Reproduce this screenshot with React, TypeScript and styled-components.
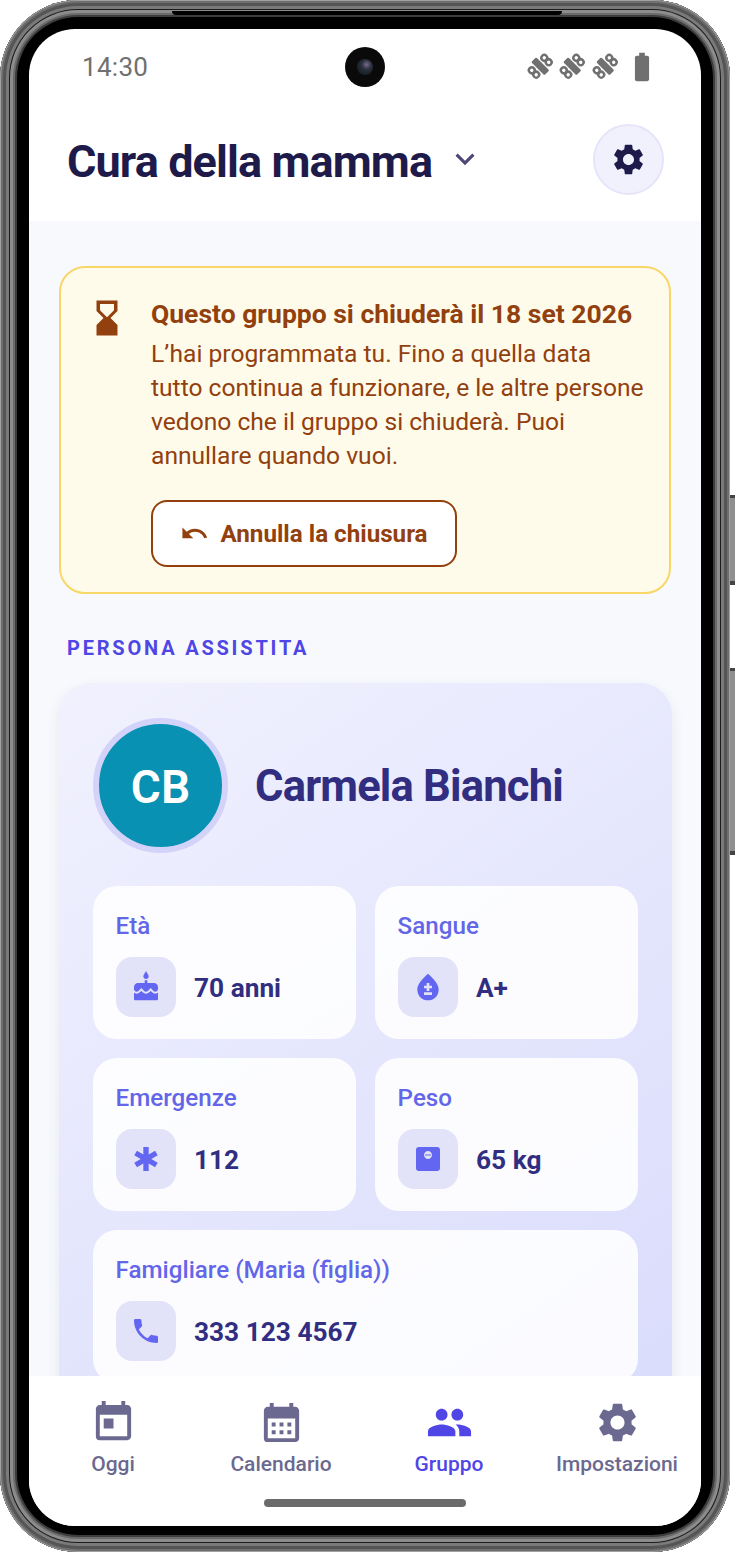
import { createGlobalStyle } from "styled-components";
import styled from "styled-components";
import {
  MdBatteryFull,
  MdBloodtype,
  MdCake,
  MdCalendarMonth,
  MdEmergency,
  MdExpandMore,
  MdHourglassBottom,
  MdMonitorWeight,
  MdPeople,
  MdPhone,
  MdSettings,
  MdToday,
  MdUndo,
} from "react-icons/md";
import type { IconType } from "react-icons";

const GlobalStyle = createGlobalStyle`
  html, body {
    margin: 0;
    background: #fff;
  }
  * {
    box-sizing: border-box;
  }
`;

type InfoItem = {
  label: string;
  value: string;
  icon: IconType;
  wide?: boolean;
};

const infoItems: InfoItem[] = [
  { label: "Età", value: "70 anni", icon: MdCake },
  { label: "Sangue", value: "A+", icon: MdBloodtype },
  { label: "Emergenze", value: "112", icon: MdEmergency },
  { label: "Peso", value: "65 kg", icon: MdMonitorWeight },
  { label: "Famigliare (Maria (figlia))", value: "333 123 4567", icon: MdPhone, wide: true },
];

type NavItem = {
  label: string;
  icon: IconType;
  active?: boolean;
};

const navItems: NavItem[] = [
  { label: "Oggi", icon: MdToday },
  { label: "Calendario", icon: MdCalendarMonth },
  { label: "Gruppo", icon: MdPeople, active: true },
  { label: "Impostazioni", icon: MdSettings },
];

// the satellite glyph of the status bar: body bar with two "8" shaped panels
function SatelliteIcon() {
  return (
    <svg width="32.5" height="32.5" viewBox="0 0 28 28">
      <g transform="rotate(-45 14 14)" fill="none" stroke="currentColor" strokeWidth="2.1">
        <rect x="11" y="6" width="6" height="16" rx="1" fill="currentColor" stroke="none" />
        <circle cx="6.4" cy="11.3" r="2.5" />
        <circle cx="6.4" cy="16.7" r="2.5" />
        <circle cx="21.6" cy="11.3" r="2.5" />
        <circle cx="21.6" cy="16.7" r="2.5" />
      </g>
    </svg>
  );
}

export default function App() {
  return (
    <Page>
      <GlobalStyle />
      <Phone>
        <Earpiece />
        <SideButton $top={495} $height={90} />
        <SideButton $top={668} $height={187} />
        <Screen>
          <StatusBar>
            <Clock>14:30</Clock>
            <Camera>
              <Lens />
            </Camera>
            <StatusIcons>
              <SatelliteIcon />
              <SatelliteIcon />
              <SatelliteIcon />
              <BatteryIcon>
                <MdBatteryFull size={34} />
              </BatteryIcon>
            </StatusIcons>
          </StatusBar>

          <Header>
            <GroupTitle>Cura della mamma</GroupTitle>
            <Chevron>
              <MdExpandMore size={38} />
            </Chevron>
            <SettingsButton>
              <MdSettings size={37} />
            </SettingsButton>
          </Header>

          <Content>
            <Banner>
              <BannerIcon>
                <MdHourglassBottom size={42} />
              </BannerIcon>
              <BannerBody>
                <BannerTitle>Questo gruppo si chiuderà il 18 set 2026</BannerTitle>
                <BannerText>
                  L’hai programmata tu. Fino a quella data tutto continua a funzionare, e le altre
                  persone vedono che il gruppo si chiuderà. Puoi annullare quando vuoi.
                </BannerText>
                <UndoButton>
                  <MdUndo size={29} />
                  Annulla la chiusura
                </UndoButton>
              </BannerBody>
            </Banner>

            <SectionLabel>PERSONA ASSISTITA</SectionLabel>

            <PersonCard>
              <PersonHeader>
                <Avatar>CB</Avatar>
                <PersonName>Carmela Bianchi</PersonName>
              </PersonHeader>
              <InfoGrid>
                {infoItems.map((item) => (
                  <InfoCell key={item.label} $wide={item.wide}>
                    <InfoLabel>{item.label}</InfoLabel>
                    <InfoRow>
                      <IconTile>
                        <item.icon size={32} />
                      </IconTile>
                      <InfoValue>{item.value}</InfoValue>
                    </InfoRow>
                  </InfoCell>
                ))}
              </InfoGrid>
            </PersonCard>
          </Content>

          <BottomNav>
            <NavRow>
              {navItems.map((item) => (
                <NavButton key={item.label} $active={item.active}>
                  <item.icon size={47} />
                  <NavLabel>{item.label}</NavLabel>
                </NavButton>
              ))}
            </NavRow>
            <HomeBar />
          </BottomNav>
        </Screen>
      </Phone>
    </Page>
  );
}

const Page = styled.div`
  width: 735px;
  height: 1553px;
  overflow: hidden;
  background: #fff;
  font-family: Roboto, "Liberation Sans", sans-serif;
`;

const Phone = styled.div`
  position: relative;
  width: 730px;
  height: 1552px;
  padding: 29px 29px 26px 29px;
  border-radius: 78px;
  background: #000;
  box-shadow:
    inset 0 0 0 1px #a0a0a0,
    inset 0 0 0 3px #6e6e6e,
    inset 0 0 0 6px #555,
    inset 0 0 0 9px #7a7a7a,
    inset 0 0 0 10px #1c1c1c,
    inset 0 0 0 13px #8c8c8c,
    inset 0 0 0 15px #6a6a6a,
    inset 0 0 0 17px #3c3c3c;
`;

const Earpiece = styled.div`
  position: absolute;
  top: 11px;
  left: 172px;
  width: 390px;
  height: 4px;
  border-radius: 0 0 4px 4px;
  background: #000;
`;

const SideButton = styled.div<{ $top: number; $height: number }>`
  position: absolute;
  top: ${({ $top }) => $top}px;
  right: -5px;
  width: 5px;
  height: ${({ $height }) => $height}px;
  background: #8f8f8f;
  border-top: 3px solid #444;
  border-bottom: 4px solid #444;
`;

const Screen = styled.div`
  width: 672px;
  height: 1497px;
  display: flex;
  flex-direction: column;
  border-radius: 46px;
  overflow: hidden;
  background: #fff;
`;

const StatusBar = styled.div`
  position: relative;
  height: 75px;
  flex-shrink: 0;
  display: flex;
  align-items: center;
  justify-content: space-between;
  padding: 0 42px 0 53px;
`;

const Clock = styled.div`
  font-size: 26px;
  letter-spacing: 0.3px;
  color: #707070;
`;

const Camera = styled.div`
  position: absolute;
  top: 18px;
  left: 316px;
  width: 40px;
  height: 40px;
  border-radius: 50%;
  background: #0a0a0a;
  display: flex;
  align-items: center;
  justify-content: center;
`;

const Lens = styled.div`
  width: 16px;
  height: 16px;
  border-radius: 50%;
  background: radial-gradient(circle at 60% 35%, #7a6a8a 0, #27303c 35%, #10141a 100%);
`;

const StatusIcons = styled.div`
  display: flex;
  align-items: center;
  color: #707070;
`;

const BatteryIcon = styled.span`
  display: flex;
  margin-left: 4px;
`;

const Header = styled.div`
  height: 117px;
  flex-shrink: 0;
  display: flex;
  align-items: center;
  padding: 0 37px 7px 38px;
  background: #fff;
`;

const GroupTitle = styled.div`
  margin-top: 4px;
  font-size: 45px;
  font-weight: 700;
  letter-spacing: -0.9px;
  color: #1e1b4b;
`;

const Chevron = styled.span`
  display: flex;
  margin-left: 14px;
  color: #4c4878;
`;

const SettingsButton = styled.div`
  margin-left: auto;
  width: 71px;
  height: 71px;
  border-radius: 50%;
  display: flex;
  align-items: center;
  justify-content: center;
  background: #f1f0fd;
  border: 2px solid #e6e4fa;
  color: #1e1b4b;
`;

const Content = styled.div`
  flex: 1;
  min-height: 0;
  overflow: hidden;
  padding: 45px 29px 0 30px;
  background: #f7f9fd;
`;

const Banner = styled.div`
  display: flex;
  gap: 23px;
  padding: 27px 20px 25px 29px;
  background: #fffbeb;
  border: 2px solid #f8d768;
  border-radius: 26px;
  width: 612px;
`;

const BannerIcon = styled.div`
  flex-shrink: 0;
  height: 42px;
  margin-top: 2px;
  margin-left: -4px;
  color: #92400e;
`;

const BannerBody = styled.div`
  display: flex;
  flex-direction: column;
  align-items: flex-start;
`;

const BannerTitle = styled.div`
  font-size: 26.5px;
  font-weight: 700;
  line-height: 38px;
  color: #92400e;
  white-space: nowrap;
`;

const BannerText = styled.div`
  max-width: 494px;
  font-size: 24.6px;
  line-height: 34px;
  color: #92400e;
  margin-top: 4px;
`;

const UndoButton = styled.div`
  display: flex;
  align-items: center;
  justify-content: center;
  gap: 11px;
  width: 306px;
  height: 67px;
  margin-top: 27px;
  background: #fff;
  border: 2px solid #92400e;
  border-radius: 16px;
  font-size: 24.2px;
  font-weight: 700;
  color: #92400e;
`;

const SectionLabel = styled.div`
  margin: 42px 0 23px 8px;
  font-size: 20px;
  font-weight: 700;
  line-height: 24px;
  letter-spacing: 2.8px;
  color: #4f46e5;
`;

const PersonCard = styled.div`
  width: 613px;
  padding: 35px 34px 40px 34px;
  border-radius: 32px;
  background: linear-gradient(145deg, #f1f1fe 0%, #d9dcfc 100%);
  box-shadow: 0 6px 14px rgba(60, 60, 110, 0.09);
`;

const PersonHeader = styled.div`
  display: flex;
  align-items: center;
  gap: 27px;
  margin-bottom: 33px;
`;

const Avatar = styled.div`
  width: 135px;
  height: 135px;
  border-radius: 50%;
  display: flex;
  align-items: center;
  justify-content: center;
  padding-top: 2px;
  background: #0891b2;
  border: 6px solid #d3d3fa;
  font-size: 46px;
  font-weight: 600;
  color: #fff;
`;

const PersonName = styled.div`
  margin-top: 2px;
  font-size: 43.5px;
  font-weight: 700;
  letter-spacing: -0.8px;
  color: #312e81;
`;

const InfoGrid = styled.div`
  display: grid;
  grid-template-columns: 263px 263px;
  gap: 19px;
`;

const InfoCell = styled.div<{ $wide?: boolean }>`
  grid-column: ${({ $wide }) => ($wide ? "1 / -1" : "auto")};
  height: 153px;
  padding: 23px 22.6px;
  border-radius: 24px;
  background: rgba(255, 255, 255, 0.88);
`;

const InfoLabel = styled.div`
  font-size: 24.2px;
  font-weight: 500;
  line-height: 34px;
  color: #6366e8;
`;

const InfoRow = styled.div`
  display: flex;
  align-items: center;
  gap: 18.4px;
  margin-top: 14px;
`;

const IconTile = styled.div`
  width: 60px;
  height: 60px;
  border-radius: 16px;
  display: flex;
  align-items: center;
  justify-content: center;
  background: #e2e3f9;
  color: #6366f1;
`;

const InfoValue = styled.div`
  margin-top: 2px;
  font-size: 26.25px;
  font-weight: 700;
  color: #312e81;
`;

const BottomNav = styled.div`
  height: 150px;
  flex-shrink: 0;
  display: flex;
  flex-direction: column;
  align-items: center;
  background: #fff;
`;

const NavRow = styled.div`
  width: 100%;
  display: grid;
  grid-template-columns: repeat(4, 1fr);
  padding-top: 23px;
`;

const NavButton = styled.div<{ $active?: boolean }>`
  display: flex;
  flex-direction: column;
  align-items: center;
  color: ${({ $active }) => ($active ? "#4f46e5" : "#6b6990")};
`;

const NavLabel = styled.div`
  margin-top: 4px;
  font-size: 21px;
  font-weight: 500;
  line-height: 28px;
`;

const HomeBar = styled.div`
  width: 202px;
  height: 8px;
  margin-top: 21px;
  border-radius: 4px;
  background: #6b6b6b;
`;
